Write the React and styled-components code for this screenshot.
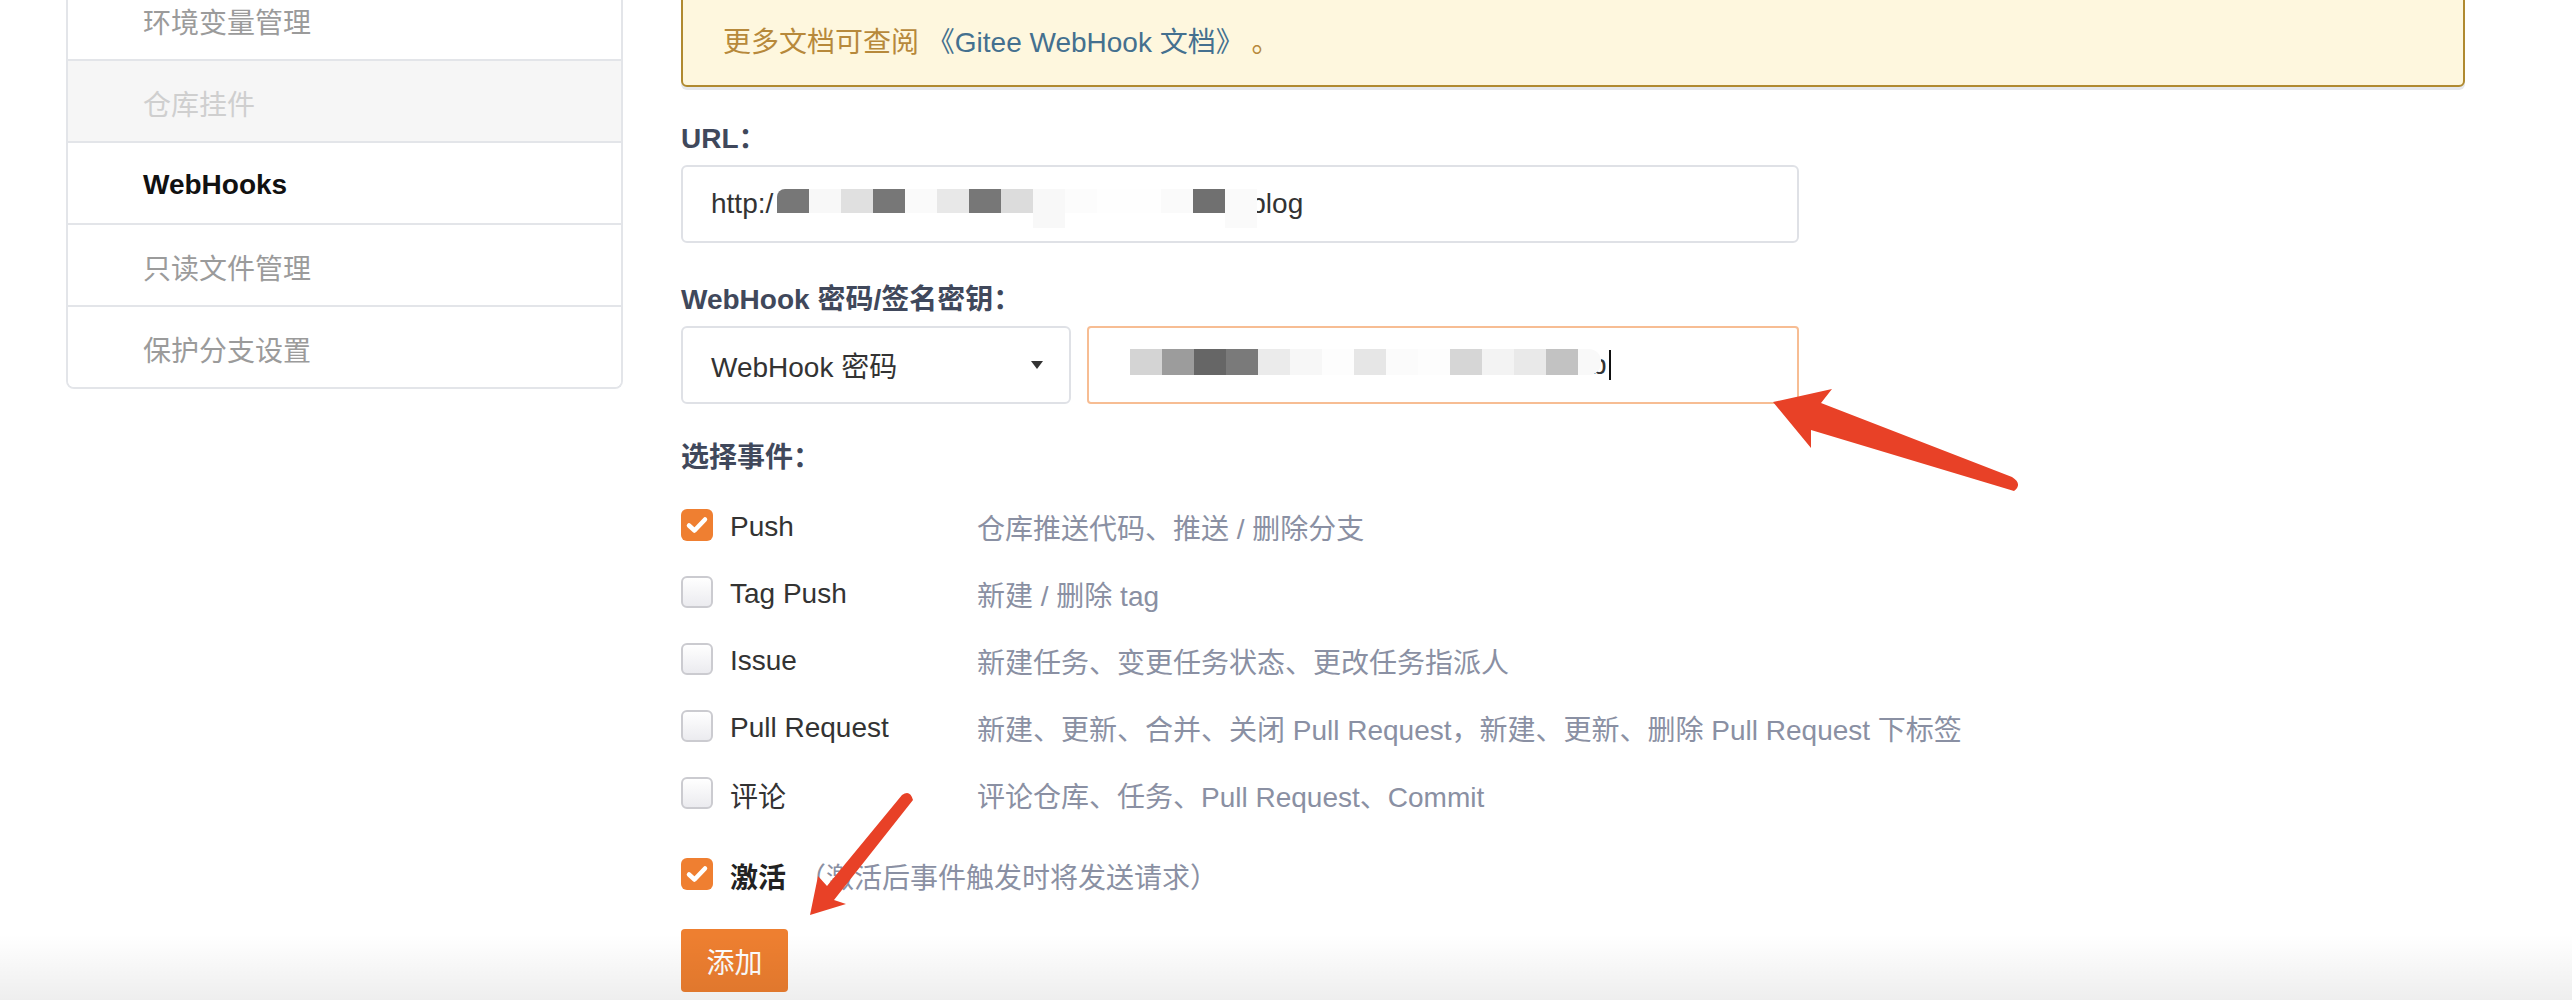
import React from 'react';
import styled, { createGlobalStyle } from 'styled-components';

const GlobalStyle = createGlobalStyle`
  html, body { margin: 0; padding: 0; background: #fff; }
  body {
    font-family: "Liberation Sans", "Noto Sans CJK SC", sans-serif;
    font-size: 28px;
    color: #333;
    overflow: hidden;
  }
  * { box-sizing: border-box; }
`;

const Page = styled.div`
  position: relative;
  width: 2572px;
  height: 1000px;
  overflow: hidden;
  background: #fff;
`;

const Layout = styled.div`
  display: flex;
  align-items: flex-start;
  gap: 58px;
  padding-left: 66px;
  margin-top: -21px;
`;

const Sidebar = styled.nav`
  width: 557px;
  border: 2px solid #e3e5e9;
  border-top: none;
  border-radius: 0 0 8px 8px;
  overflow: hidden;
`;

const NavItem = styled.div`
  height: 82px;
  display: flex;
  align-items: center;
  padding: 4px 0 0 75px;
  border-bottom: 2px solid #e3e5e9;
  font-size: 28px;
  color: ${p => (p.$active ? '#111' : p.$disabled ? '#cfcfcf' : '#9b9b9b')};
  font-weight: ${p => (p.$active ? 700 : 400)};
  background: ${p => (p.$disabled ? '#f6f6f6' : '#fff')};
  &:last-child { border-bottom: none; height: 80px; }
`;

const Main = styled.main`
  width: 1784px;
  display: flex;
  flex-direction: column;
`;

const Notice = styled.div`
  background: #fef7de;
  border: 2px solid #b08a30;
  border-radius: 6px;
  box-shadow: 0 3px 0 #e6e8ec;
  padding: 42px 40px 22px;
  line-height: 40px;
  color: #b7893b;
`;

const NoticeLink = styled.a`
  color: #44708f;
  text-decoration: none;
`;

const Form = styled.div`
  width: 1118px;
  display: flex;
  flex-direction: column;
`;

const Field = styled.div`
  display: flex;
  flex-direction: column;
  margin-top: ${p => (p.$first ? '32px' : '37px')};
`;

const Label = styled.label`
  line-height: 40px;
  font-weight: 700;
  color: #40485b;
  margin-bottom: 6px;
`;

const InputBox = styled.div`
  height: 78px;
  border: 2px solid ${p => (p.$focused ? '#f7bd93' : '#dfe1e6')};
  border-radius: ${p => (p.$focused ? '4px' : '6px')};
  display: flex;
  align-items: center;
  padding-left: 28px;
  color: #333;
  white-space: nowrap;
  overflow: hidden;
  flex: ${p => (p.$grow ? 1 : 'none')};
`;

const Row = styled.div`
  display: flex;
  gap: 16px;
`;

const Select = styled.div`
  width: 390px;
  height: 78px;
  border: 2px solid #dfe1e6;
  border-radius: 6px;
  display: flex;
  align-items: center;
  justify-content: space-between;
  padding: 0 26px 0 28px;
  color: #333;
`;

const Mosaic = styled.span`
  position: relative;
  z-index: 1;
  display: inline-flex;
  margin-left: ${p => p.$ml}px;
  margin-right: ${p => p.$mr}px;
  margin-bottom: 6px;
`;

const Block = styled.span`
  display: block;
  width: ${p => p.$w || 32}px;
  height: ${p => p.$h}px;
  background: ${p => p.$c};
  box-shadow: ${p => (p.$ext ? `0 15px 0 ${p.$c}` : 'none')};
  border-radius: ${p => p.$r || '0'};
`;

const Caret = styled.span`
  display: inline-block;
  width: 2px;
  height: 30px;
  background: #111;
  margin-left: 2px;
`;

const SectionLabel = styled(Label)`
  margin-top: 34px;
  margin-bottom: 0;
`;

const EventList = styled.div`
  margin-top: 15px;
  display: flex;
  flex-direction: column;
`;

const EventRow = styled.div`
  height: 67px;
  display: grid;
  grid-template-columns: 296px 1fr;
  align-items: center;
`;

const EventName = styled.div`
  display: flex;
  align-items: center;
  gap: 17px;
  color: #333;
`;

const EventDesc = styled.div`
  color: #8a90a3;
  white-space: nowrap;
`;

const Box = styled.span`
  width: 32px;
  height: 32px;
  border-radius: 6px;
  display: inline-flex;
  align-items: center;
  justify-content: center;
  flex: none;
  margin-top: -4px;
  background: ${p => (p.$checked ? '#ef7f31' : 'linear-gradient(#ffffff, #ebebef)')};
  border: ${p => (p.$checked ? 'none' : '2px solid #cbcbd0')};
`;

const ActiveRow = styled.div`
  margin-top: 14px;
  height: 67px;
  display: flex;
  align-items: center;
  gap: 17px;
`;

const ActiveLabel = styled.span`
  font-weight: 700;
  color: #222;
`;

const ActiveHint = styled.span`
  color: #8a90a3;
  margin-left: -5px;
`;

const Button = styled.button`
  margin-top: 20px;
  width: 107px;
  height: 63px;
  border: none;
  border-radius: 4px;
  background: #ee7f30;
  color: #fff;
  font-family: inherit;
  font-size: 28px;
  padding: 0;
`;

const Annotations = styled.svg`
  position: absolute;
  top: 0;
  left: 0;
  pointer-events: none;
  z-index: 5;
`;

const BottomFade = styled.div`
  position: absolute;
  left: 0;
  right: 0;
  bottom: 0;
  height: 66px;
  background: linear-gradient(rgba(0, 0, 0, 0), rgba(0, 0, 0, 0.065));
  pointer-events: none;
  z-index: 4;
`;

const Checkbox = ({ checked }) => (
  <Box $checked={checked}>
    {checked && (
      <svg width="32" height="32" viewBox="0 0 32 32">
        <path d="M8 16.5 L13.5 21.5 L24 10.5" fill="none" stroke="#fff" strokeWidth="4.5" strokeLinecap="round" strokeLinejoin="round" />
      </svg>
    )}
  </Box>
);

const urlBlocks = [
  { c: '#777', r: '8px 0 0 0' }, { c: '#f8f8f8' }, { c: '#e0e0e0' }, { c: '#777' },
  { c: '#fafafa' }, { c: '#e8e8e8' }, { c: '#777' }, { c: '#dcdcdc' },
  { c: '#f8f8f8', ext: true }, { c: '#fcfcfc' }, { c: '#fefefe' }, { c: '#fefefe' },
  { c: '#fafafa' }, { c: '#707070' }, { c: '#fafafa', ext: true },
];

const secretBlocks = [
  { c: '#d4d4d4' }, { c: '#9c9c9c' }, { c: '#666' }, { c: '#7a7a7a' },
  { c: '#ebebeb' }, { c: '#f7f7f7' }, { c: '#fdfdfd' }, { c: '#e6e6e6' },
  { c: '#fbfbfb' }, { c: '#fdfdfd' }, { c: '#d6d6d6' }, { c: '#f3f3f3' },
  { c: '#e9e9e9' }, { c: '#c2c2c2' }, { c: '#f9f9f9', w: 23, r: '0 12px 12px 0' },
];

const navItems = [
  { label: '环境变量管理' },
  { label: '仓库挂件', disabled: true },
  { label: 'WebHooks', active: true },
  { label: '只读文件管理' },
  { label: '保护分支设置' },
];

const events = [
  { name: 'Push', desc: '仓库推送代码、推送 / 删除分支', checked: true },
  { name: 'Tag Push', desc: '新建 / 删除 tag' },
  { name: 'Issue', desc: '新建任务、变更任务状态、更改任务指派人' },
  { name: 'Pull Request', desc: '新建、更新、合并、关闭 Pull Request，新建、更新、删除 Pull Request 下标签' },
  { name: '评论', desc: '评论仓库、任务、Pull Request、Commit' },
];

export default function App() {
  return (
    <Page>
      <GlobalStyle />
      <Layout>
        <Sidebar>
          {navItems.map(item => (
            <NavItem key={item.label} $active={item.active} $disabled={item.disabled}>
              {item.label}
            </NavItem>
          ))}
        </Sidebar>
        <Main>
          <Notice>
            更多文档可查阅 <NoticeLink href="#">《Gitee WebHook 文档》</NoticeLink> 。
          </Notice>
          <Form>
            <Field $first>
              <Label>URL：</Label>
              <InputBox>
                <span>http:/</span>
                <Mosaic $ml={4} $mr={-7}>
                  {urlBlocks.map((b, i) => (
                    <Block key={i} $c={b.c} $h={24} $ext={b.ext} $r={b.r} />
                  ))}
                </Mosaic>
                <span>blog</span>
              </InputBox>
            </Field>
            <Field>
              <Label>WebHook 密码/签名密钥：</Label>
              <Row>
                <Select>
                  <span>WebHook 密码</span>
                  <svg width="12" height="8" viewBox="0 0 12 8">
                    <polygon points="0,0 12,0 6,8" fill="#333" />
                  </svg>
                </Select>
                <InputBox $focused $grow>
                  <Mosaic $ml={13} $mr={-10}>
                    {secretBlocks.map((b, i) => (
                      <Block key={i} $c={b.c} $h={26} $w={b.w} $r={b.r} />
                    ))}
                  </Mosaic>
                  <span>b</span>
                  <Caret />
                </InputBox>
              </Row>
            </Field>
            <SectionLabel>选择事件：</SectionLabel>
            <EventList>
              {events.map(ev => (
                <EventRow key={ev.name}>
                  <EventName>
                    <Checkbox checked={ev.checked} />
                    <span>{ev.name}</span>
                  </EventName>
                  <EventDesc>{ev.desc}</EventDesc>
                </EventRow>
              ))}
            </EventList>
            <ActiveRow>
              <Checkbox checked />
              <ActiveLabel>激活</ActiveLabel>
              <ActiveHint>（激活后事件触发时将发送请求）</ActiveHint>
            </ActiveRow>
            <div>
              <Button>添加</Button>
            </div>
          </Form>
        </Main>
      </Layout>
      <BottomFade />
      <Annotations width="2572" height="1000" viewBox="0 0 2572 1000">
        <path d="M1773,402 L1832,389 L1821,403 L2012,477 Q2023,484 2014,491 L1811,430 L1811,448 Z" fill="#e84127" />
        <path d="M810,915 L818,876 L827,886 L902,795 Q910,789 913,800 L834,900 L846,904 Z" fill="#e84127" />
      </Annotations>
    </Page>
  );
}
